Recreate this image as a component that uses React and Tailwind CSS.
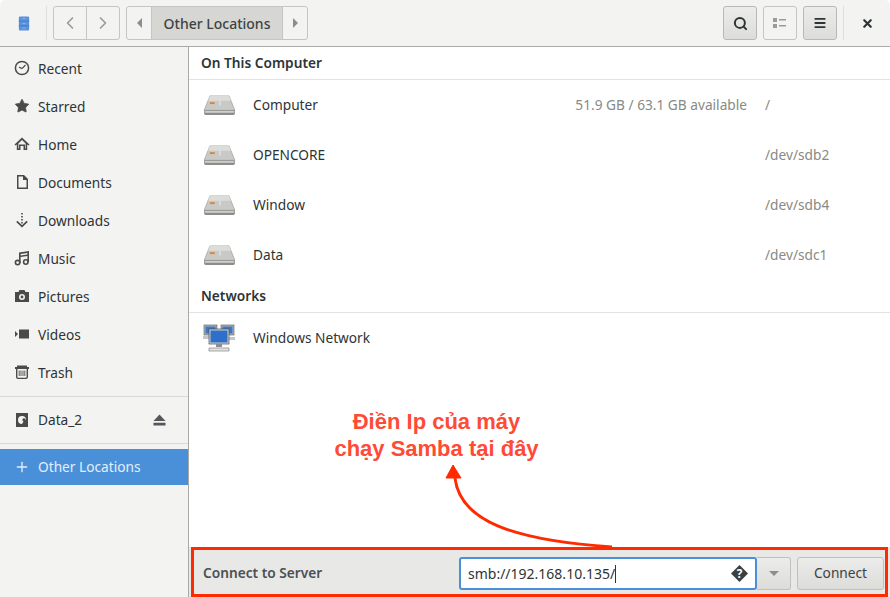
import { Search, ChevronLeft, ChevronRight, Menu, X, Star, Plus } from "lucide-react";

function Ic({ children, cls = "w-4 h-4 text-[#4a4a48]" }) {
    return (
        <svg viewBox="0 0 16 16" className={cls} fill="currentColor">
            {children}
        </svg>
    );
}

const sideItems = [
    {
        name: "Recent",
        icon: (
            <Ic>
                <circle cx="8" cy="8" r="6.6" fill="none" stroke="currentColor" strokeWidth="1.5" />
                <path d="M8 8.6 L5 7 M8 8.6 L11.5 5" fill="none" stroke="currentColor" strokeWidth="1.2" />
            </Ic>
        ),
    },
    {
        name: "Starred",
        icon: <Star className="w-4 h-4 text-[#4a4a48]" fill="currentColor" strokeWidth={1} />,
    },
    {
        name: "Home",
        icon: (
            <Ic>
                <path d="M8 1.5 L0.5 8.5 L1.5 9.5 L2.8 8.4 V14 H6.5 V10 H9.5 V14 H13.2 V8.4 L14.5 9.5 L15.5 8.5 Z M4.4 7.4 L8 4 L11.6 7.4 V12.5 H11 V8.6 H5 V12.5 H4.4 Z" fillRule="evenodd" />
            </Ic>
        ),
    },
    {
        name: "Documents",
        icon: (
            <Ic>
                <path d="M3 1 H10 L14 5 V15 H3 Z M4.5 2.5 V13.5 H12.5 V6 H9 V2.5 Z" fillRule="evenodd" />
            </Ic>
        ),
    },
    {
        name: "Downloads",
        icon: (
            <Ic>
                <path d="M7.2 1 H8.8 V2.6 H7.2 Z M7.2 4 H8.8 V5.6 H7.2 Z M7.2 7 H8.8 V8.6 H7.2 Z M7.2 10 H8.8 V11.6 H7.2 Z" />
                <path d="M2.8 9.4 L8 14.4 L13.2 9.4" fill="none" stroke="currentColor" strokeWidth="1.7" />
            </Ic>
        ),
    },
    {
        name: "Music",
        icon: (
            <Ic>
                <path d="M5 2.5 L15 1 V12 H13.4 V6 L6.6 7 V13 H5 Z M6.6 4 V5.4 L13.4 4.4 V3 Z" fillRule="evenodd" />
                <circle cx="3.6" cy="12.6" r="2.2" fill="none" stroke="currentColor" strokeWidth="1.6" />
                <circle cx="11.8" cy="12" r="2.2" fill="none" stroke="currentColor" strokeWidth="1.6" />
            </Ic>
        ),
    },
    {
        name: "Pictures",
        icon: (
            <Ic>
                <path d="M1 4 H4.5 L5.5 2 H10.5 L11.5 4 H15 V14 H1 Z M8 6 A3 3 0 1 0 8 12 A3 3 0 1 0 8 6 Z M8 7.6 A1.4 1.4 0 1 1 8 10.4 A1.4 1.4 0 1 1 8 7.6 Z" fillRule="evenodd" />
            </Ic>
        ),
    },
    {
        name: "Videos",
        icon: (
            <Ic>
                <path d="M5 3.5 H15 V12.5 H5 Z M1 5 L4 8 L1 11 Z" />
            </Ic>
        ),
    },
    {
        name: "Trash",
        icon: (
            <Ic>
                <path d="M3 1.5 H13 V3 H3 Z" />
                <path d="M1 3 H15 V5 H14 V13 Q14 15 12 15 H4 Q2 15 2 13 V5 H1 Z M3.4 5 V13 Q3.4 13.7 4.2 13.7 H11.8 Q12.6 13.7 12.6 13 V5 Z" fillRule="evenodd" />
                <path d="M5.2 6.5 V12 M7 6.5 V12 M9 6.5 V12 M10.8 6.5 V12" stroke="currentColor" strokeWidth="0.9" fill="none" />
            </Ic>
        ),
    },
];

function DriveIcon() {
    return (
        <svg viewBox="0 0 34 24" className="w-[33px] h-[23px]">
            <path d="M7 2 H27 L33 17 H1 Z" fill="#c9c9c7" stroke="#a3a3a1" strokeWidth="0.8" />
            <path d="M7 2 H27 L29 7 H5 Z" fill="#dcdcda" />
            <rect x="7" y="8.5" width="5" height="2" fill="#d9853e" />
            <rect x="17" y="7" width="1" height="5" fill="#eeeeec" />
            <path d="M1 17 H33 V20 Q33 22 31 22 H3 Q1 22 1 20 Z" fill="#8c8c8a" />
            <path d="M2 18 H32 V19.4 H2 Z" fill="#e6e6e4" />
        </svg>
    );
}

function NetworkIcon() {
    return (
        <svg viewBox="0 0 32 28" className="w-[32px] h-[28px]">
            <rect x="1" y="1" width="13" height="10" fill="#aab2b8" stroke="#555" strokeWidth="0.6" />
            <rect x="2.5" y="2.5" width="10" height="7" fill="#3d78c4" />
            <rect x="18" y="1" width="13" height="10" fill="#aab2b8" stroke="#555" strokeWidth="0.6" />
            <rect x="19.5" y="2.5" width="10" height="7" fill="#3d78c4" />
            <path d="M0 12 H6 V15 H0 Z M26 13 H32 V16 H26 Z" fill="#c4c8c8" />
            <rect x="6" y="5" width="20" height="15" fill="#c9ced2" stroke="#4d4d4d" strokeWidth="0.7" />
            <rect x="7.5" y="6.5" width="17" height="12" fill="#2f6fc9" />
            <path d="M13 20 H19 V23 H13 Z" fill="#8d8d8d" />
            <path d="M6 24 H26 V27 H6 Z" fill="#e4e4e2" stroke="#6e6e6e" strokeWidth="0.6" />
        </svg>
    );
}

const rows = [
    { name: "Computer", info: "51.9 GB / 63.1 GB available", path: "/" },
    { name: "OPENCORE", info: "", path: "/dev/sdb2" },
    { name: "Window", info: "", path: "/dev/sdb4" },
    { name: "Data", info: "", path: "/dev/sdc1" },
];

export default function App() {
    return (
        <div className="relative w-[890px] h-[597px] overflow-hidden bg-white font-['Noto_Sans',sans-serif] text-[13.7px] text-[#2e3436]">
            {/* Header */}
            <div className="h-[47px] flex items-center bg-[#f3f3f2] border-b border-[#a9a9a5] rounded-t-[5px]">
                <div className="w-[46px] flex justify-center">
                    <svg viewBox="0 0 12 16" className="w-[12px] h-[15px] ml-[1px]">
                        <rect x="0.5" y="0.5" width="11" height="15" rx="1" fill="#5a92de" />
                        <path d="M0.5 5.5 H11.5 M0.5 10.5 H11.5" stroke="#3c6fb8" strokeWidth="0.7" />
                        <path d="M4.5 3 H7.5 M4.5 8 H7.5 M4.5 13 H7.5" stroke="#9cc0ee" strokeWidth="0.8" />
                    </svg>
                </div>
                <div className="w-px h-[34px] bg-[#dededc]" />
                <div className="ml-[6px] flex h-[34px] w-[67px] rounded-[3px] border border-[#c5c5c2] bg-[#f3f3f2]">
                    <div className="w-[33px] flex items-center justify-center border-r border-[#c5c5c2]">
                        <ChevronLeft className="w-[20px] h-[20px] text-[#9a9c9c]" strokeWidth={2} />
                    </div>
                    <div className="flex-1 flex items-center justify-center">
                        <ChevronRight className="w-[20px] h-[20px] text-[#9a9c9c]" strokeWidth={2} />
                    </div>
                </div>
                <div className="ml-[6px] flex h-[34px] w-[182px] rounded-[3px] border border-[#c5c5c2] bg-[#f3f3f2]">
                    <div className="w-[25px] flex items-center justify-center border-r border-[#c5c5c2]">
                        <div className="w-0 h-0 border-y-[5px] border-y-transparent border-r-[5px] border-r-[#8b8e8f]" />
                    </div>
                    <div className="w-[131px] flex items-center justify-center bg-[#d6d6d3] border-r border-[#c5c5c2] font-medium text-[14px] text-[#3d4244]">
                        Other Locations
                    </div>
                    <div className="flex-1 flex items-center justify-center">
                        <div className="w-0 h-0 border-y-[5px] border-y-transparent border-l-[5px] border-l-[#8b8e8f]" />
                    </div>
                </div>
                <div className="ml-auto flex items-center">
                    <div className="w-[34px] h-[34px] flex items-center justify-center rounded-[3px] border border-[#b8b8b5] bg-gradient-to-b from-[#ececea] to-[#dcdcd9]">
                        <Search className="w-[15px] h-[15px] text-[#2e3436]" strokeWidth={3.2} />
                    </div>
                    <div className="ml-[6px] w-[34px] h-[34px] flex items-center justify-center rounded-[3px] border border-[#c5c5c2]">
                        <svg viewBox="0 0 14 12" className="w-[14px] h-[12px] text-[#9a9c9c]" fill="currentColor">
                            <path d="M0 1 H4 V5 H0 Z M0 7 H4 V11 H0 Z M6 2 H13 V3.5 H6 Z M6 8 H13 V9.5 H6 Z" />
                        </svg>
                    </div>
                    <div className="ml-[6px] w-[34px] h-[34px] flex items-center justify-center rounded-[3px] border border-[#b8b8b5] bg-gradient-to-b from-[#ececea] to-[#dcdcd9]">
                        <Menu className="w-[14px] h-[14px] text-[#2e3436]" strokeWidth={3.2} />
                    </div>
                    <div className="ml-[6px] w-px h-[34px] bg-[#dededc]" />
                    <div className="w-[46px] flex justify-center">
                        <X className="w-[13px] h-[13px] text-[#2e3436]" strokeWidth={4} />
                    </div>
                </div>
            </div>

            <div className="flex h-[550px]">
                {/* Sidebar */}
                <div className="w-[189px] shrink-0 bg-[#f3f3f2] border-r border-[#a9a9a5] pt-[2px]">
                    {sideItems.map((it) => (
                        <div key={it.name} className="h-[38px] flex items-center pl-[14px] gap-[8px]">
                            {it.icon}
                            <span className="mt-[2px]">{it.name}</span>
                        </div>
                    ))}
                    <div className="h-px bg-[#dadad8] mt-[5px]" />
                    <div className="h-[46px] flex items-center pl-[14px] gap-[8px]">
                        <Ic>
                            <path d="M2 1 H14 V15 H2 Z M8 4 A4 4 0 1 0 8 12 L9.5 9.4 A1.6 1.6 0 1 1 11.6 8 L12 8 A4 4 0 0 0 8 4 Z" fillRule="evenodd" />
                        </Ic>
                        <span>Data_2</span>
                        <svg viewBox="0 0 14 12" className="ml-auto mr-[22px] w-[13px] h-[12px] text-[#55585a]" fill="currentColor">
                            <path d="M7 0 L13.5 7 H0.5 Z M0.5 9 H13.5 V12 H0.5 Z" />
                        </svg>
                    </div>
                    <div className="h-px bg-[#dadad8]" />
                    <div className="mt-[5px] h-[36px] flex items-center pl-[14px] gap-[8px] bg-[#4a90d9] text-[#e4eefa]">
                        <Plus className="w-4 h-4" strokeWidth={2} />
                        <span>Other Locations</span>
                    </div>
                </div>

                {/* Main */}
                <div className="flex-1 flex flex-col">
                    <div className="h-[33px] flex items-center pl-[12px] font-semibold border-b border-[#e3e3e1]">On This Computer</div>
                    {rows.map((r) => (
                        <div key={r.name} className="h-[50px] flex items-center pl-[14px]">
                            <DriveIcon />
                            <span className="ml-[17px] mt-[1px]">{r.name}</span>
                            <span className="ml-auto w-[190px] mt-[1px] whitespace-nowrap text-right text-[#888a85]">{r.info}</span>
                            <span className="ml-[18px] w-[125px] mt-[1px] text-[#888a85]">{r.path}</span>
                        </div>
                    ))}
                    <div className="h-[33px] flex items-center pl-[12px] font-semibold border-b border-[#e3e3e1]">Networks</div>
                    <div className="h-[50px] flex items-center pl-[14px]">
                        <NetworkIcon />
                        <span className="ml-[18px] mt-[1px]">Windows Network</span>
                    </div>
                    <div className="flex-1" />
                    <div className="h-[50px] flex items-center bg-[#e8e8e7] pt-[3px] pl-[14px] pr-[6px]">
                        <span className="font-semibold text-[#4b5052]">Connect to Server</span>
                        <div className="ml-auto flex">
                            <div className="w-[298px] h-[33px] flex items-center bg-white border-2 border-[#4a90d9] rounded-[3px] pl-[7px] pr-[7px] text-[14px]">
                                <span className="text-[#2e3436]">smb://192.168.10.135/</span>
                                <span className="w-px h-[18px] bg-[#2e3436]" />
                                <svg viewBox="0 0 16 16" className="ml-auto w-[17px] h-[17px]">
                                    <path d="M8 0 L16 8 L8 16 L0 8 Z" fill="#3b3f41" />
                                    <text x="8" y="12" textAnchor="middle" fontSize="11" fontWeight="700" fill="#fff">?</text>
                                </svg>
                            </div>
                            <div className="w-[34px] h-[33px] flex items-center justify-center rounded-r-[3px] border border-l-0 border-[#c0c0bd] bg-gradient-to-b from-[#ececea] to-[#dcdcd9]">
                                <div className="w-0 h-0 border-x-[5px] border-x-transparent border-t-[5px] border-t-[#8b8e8f]" />
                            </div>
                            <div className="ml-[6px] w-[87px] h-[33px] flex items-center justify-center rounded-[3px] border border-[#c0c0bd] bg-gradient-to-b from-[#ececea] to-[#dcdcd9] text-[#3d4244]">
                                Connect
                            </div>
                        </div>
                    </div>
                </div>
            </div>

            {/* Annotation */}
            <div className="absolute left-[191px] top-[547px] w-[697px] h-[50px] border-[3px] border-[#ff2a00]" />
            <div className="absolute left-[300px] top-[408px] w-[273px] text-center font-['Liberation_Sans',sans-serif] font-bold text-[22px] leading-[27px] text-[#ff4a35]">
                Điền Ip của máy
                <br />
                chạy Samba tại đây
            </div>
            <svg className="absolute left-[440px] top-[460px]" width="180" height="92" viewBox="0 0 180 92" fill="none">
                <path d="M15 18 C20 60 70 80 172 87" stroke="#ff2a00" strokeWidth="3" />
                <path d="M13 5 L21 18 L6 18 Z" fill="#ff2a00" stroke="#ff2a00" strokeWidth="1" />
            </svg>
        </div>
    );
}
